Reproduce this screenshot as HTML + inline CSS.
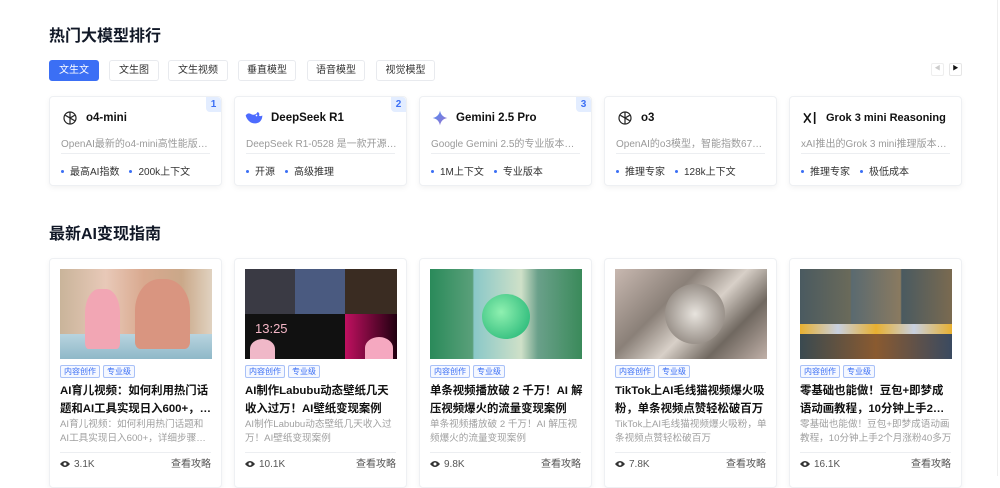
<!DOCTYPE html>
<html><head><meta charset="utf-8"><style>
*{margin:0;padding:0;box-sizing:border-box}
body{width:1000px;height:476px;overflow:hidden;background:#fff;font-family:"Liberation Sans","Noto Sans CJK SC",sans-serif;position:relative;color:#1a1a2e}
.h{position:absolute;left:49px;font-size:16px;font-weight:bold;color:#111827}
.tab{position:absolute;top:60px;height:21px;border:1px solid #e8eaee;border-radius:3px;font-size:10px;line-height:19px;text-align:center;color:#333;background:#fff}
.tab.on{background:#3b6ff5;color:#fff;border-color:#3b6ff5}
.mc{position:absolute;top:96px;width:173px;height:90px;border:1px solid #eef0f3;border-radius:4px;box-shadow:0 2px 6px rgba(0,0,0,.05);background:#fff}
.mc .ic{position:absolute;left:12px;top:13px;width:16px;height:16px}
.mc .nm{position:absolute;left:36px;top:14px;font-size:11.5px;line-height:14px;font-weight:bold;color:#111;white-space:nowrap}
.mc .ds{position:absolute;left:11px;top:38px;width:151px;font-size:10px;color:#9a9a9a;white-space:nowrap;overflow:hidden;text-overflow:ellipsis}
.mc .ln{position:absolute;left:11px;right:11px;top:56px;border-top:1px solid #eceef1}
.mc .tg{position:absolute;left:11px;top:66px;font-size:10px;color:#333;white-space:nowrap}
.mc .tg i{display:inline-block;width:3px;height:3px;border-radius:50%;background:#3b6ff5;vertical-align:middle;margin:0 6px 0 0;position:relative;top:-1px}
.mc .tg span{margin-right:10px}
.bd{position:absolute;right:0;top:0;width:15px;height:15px;background:#e3edff;color:#3b6ff5;font-size:10px;font-weight:bold;text-align:center;line-height:15px;border-radius:0 4px 0 4px}
.gc{position:absolute;top:258px;width:173px;height:230px;border:1px solid #eef0f3;border-radius:4px;box-shadow:0 2px 6px rgba(0,0,0,.05);background:#fff}
.gc .im{position:absolute;left:10px;top:10px;width:152px;height:90px;overflow:hidden}
.gc .tgs{position:absolute;left:10px;top:106px;font-size:8px;white-space:nowrap}
.gc .tgs span{display:inline-block;border:1px solid #a9c1f7;color:#3b6ff5;padding:0 3px;line-height:11px;border-radius:2px;margin-right:3px;background:#f5f8ff}
.gc .tt{position:absolute;left:10px;width:154px;top:123px;font-size:11.4px;font-weight:bold;line-height:18px;color:#111;display:-webkit-box;-webkit-line-clamp:2;-webkit-box-orient:vertical;overflow:hidden}
.gc .de{position:absolute;left:10px;width:152px;top:159px;font-size:9.6px;line-height:14px;color:#a0a0a0;display:-webkit-box;-webkit-line-clamp:2;-webkit-box-orient:vertical;overflow:hidden}
.gc .ln{position:absolute;left:10px;right:10px;top:193px;border-top:1px solid #eceef1}
.gc .ft{position:absolute;left:10px;right:10px;top:199px;height:14px;line-height:14px;font-size:10px;color:#555;display:flex;justify-content:space-between;align-items:center}
.gc .ft svg{width:10px;height:8px;margin-right:4px;vertical-align:-1px}
</style></head><body>
<div class="h" style="top:22px">热门大模型排行</div>
<div class="tab on" style="left:49px;width:50px">文生文</div>
<div class="tab" style="left:109px;width:50px">文生图</div>
<div class="tab" style="left:168px;width:60px">文生视频</div>
<div class="tab" style="left:238px;width:58px">垂直模型</div>
<div class="tab" style="left:307px;width:58px">语音模型</div>
<div class="tab" style="left:376px;width:59px">视觉模型</div>
<div style="position:absolute;left:931px;top:63px;width:13px;height:13px;border:1px solid #eee;border-radius:2px;font-size:6px;color:#ccc;text-align:center;line-height:11px">◀</div>
<div style="position:absolute;left:949px;top:63px;width:13px;height:13px;border:1px solid #e6e6e6;border-radius:2px;font-size:6px;color:#111;text-align:center;line-height:11px">▶</div>
<div style="position:absolute;left:997px;top:0;width:1px;height:476px;background:#eee"></div>

<div class="mc" style="left:49px"><svg class="ic" viewBox="0 0 24 24" fill="none" stroke="#222" stroke-width="1.8"><circle cx="12" cy="12" r="9"/><path d="M12 3v9l7 4M5 8l7 4v9M19 8l-7 4"/></svg><div class="nm">o4-mini</div><div class="ds">OpenAI最新的o4-mini高性能版本...</div><div class="ln"></div><div class="tg"><i></i><span>最高AI指数</span><i></i><span>200k上下文</span></div><div class="bd">1</div></div>
<div class="mc" style="left:234px"><svg class="ic" style="width:20px;left:9px" viewBox="0 0 24 18"><path d="M2 6c2 7 8 11 14 9 4-1 6-5 6-9-2 1-3 1-4 0 1-2 0-4-2-4-1 3-5 4-8 2C6 3 4 3 2 6z" fill="#4d6bfe"/><circle cx="15" cy="6" r="1" fill="#fff"/></svg><div class="nm">DeepSeek R1</div><div class="ds">DeepSeek R1-0528 是一款开源推...</div><div class="ln"></div><div class="tg"><i></i><span>开源</span><i></i><span>高级推理</span></div><div class="bd">2</div></div>
<div class="mc" style="left:419px"><svg class="ic" viewBox="0 0 24 24"><defs><linearGradient id="g" x1="0" y1="0" x2="1" y2="1"><stop offset="0" stop-color="#4f8df5"/><stop offset="1" stop-color="#9b72cb"/></linearGradient></defs><path d="M12 1C13 7 17 11 23 12 17 13 13 17 12 23 11 17 7 13 1 12 7 11 11 7 12 1z" fill="url(#g)"/></svg><div class="nm">Gemini 2.5 Pro</div><div class="ds">Google Gemini 2.5的专业版本，...</div><div class="ln"></div><div class="tg"><i></i><span>1M上下文</span><i></i><span>专业版本</span></div><div class="bd">3</div></div>
<div class="mc" style="left:604px"><svg class="ic" viewBox="0 0 24 24" fill="none" stroke="#222" stroke-width="1.8"><circle cx="12" cy="12" r="9"/><path d="M12 3v9l7 4M5 8l7 4v9M19 8l-7 4"/></svg><div class="nm">o3</div><div class="ds">OpenAI的o3模型，智能指数67分...</div><div class="ln"></div><div class="tg"><i></i><span>推理专家</span><i></i><span>128k上下文</span></div></div>
<div class="mc" style="left:789px"><svg class="ic" viewBox="0 0 24 24" stroke="#111" stroke-width="2.4" fill="none"><path d="M3 5l10 14M13 5L3 19M19 3v18"/></svg><div class="nm" style="font-size:11px">Grok 3 mini Reasoning</div><div class="ds">xAI推出的Grok 3 mini推理版本，...</div><div class="ln"></div><div class="tg"><i></i><span>推理专家</span><i></i><span>极低成本</span></div></div>

<div class="h" style="top:220px">最新AI变现指南</div>

<div class="gc" style="left:49px"><div class="im" style="background:linear-gradient(90deg,#c9b49a 0%,#e8c9b8 30%,#d9a98f 55%,#caa889 80%,#e0d2c0 100%)"><div style="position:absolute;left:0;bottom:0;width:152px;height:25px;background:linear-gradient(#b8d4df,#8fb8c8)"></div><div style="position:absolute;left:25px;top:20px;width:35px;height:60px;border-radius:40% 40% 10% 10%;background:#f2a6b4"></div><div style="position:absolute;left:75px;top:10px;width:55px;height:70px;border-radius:45% 45% 10% 10%;background:#d99580"></div></div><div class="tgs"><span>内容创作</span><span>专业级</span></div><div class="tt">AI育儿视频：如何利用热门话题和AI工具实现日入600+，详细步骤拆解</div><div class="de">AI育儿视频：如何利用热门话题和AI工具实现日入600+，详细步骤拆解</div><div class="ln"></div><div class="ft"><span><svg viewBox="0 0 10 8"><path d="M0 4Q5-2 10 4Q5 10 0 4z" fill="#333"/><circle cx="5" cy="4" r="1.5" fill="#fff"/></svg>3.1K</span><span>查看攻略</span></div></div>
<div class="gc" style="left:234px"><div class="im" style="background:#111"><div style="position:absolute;left:0;top:0;width:50px;height:45px;background:#3a3a44"></div><div style="position:absolute;left:50px;top:0;width:50px;height:45px;background:#4a5a80"></div><div style="position:absolute;left:100px;top:0;width:52px;height:45px;background:#3a2c22"></div><div style="position:absolute;left:100px;top:45px;width:52px;height:45px;background:linear-gradient(90deg,#c01060,#200010)"></div><div style="position:absolute;left:10px;top:52px;color:#f4b6c6;font-size:13px">13:25</div><div style="position:absolute;left:5px;top:70px;width:25px;height:20px;border-radius:50% 50% 0 0;background:#f0b8c8"></div><div style="position:absolute;left:120px;top:68px;width:28px;height:22px;border-radius:50% 50% 0 0;background:#f5a8c0"></div></div><div class="tgs"><span>内容创作</span><span>专业级</span></div><div class="tt">AI制作Labubu动态壁纸几天收入过万！AI壁纸变现案例</div><div class="de">AI制作Labubu动态壁纸几天收入过万！AI壁纸变现案例</div><div class="ln"></div><div class="ft"><span><svg viewBox="0 0 10 8"><path d="M0 4Q5-2 10 4Q5 10 0 4z" fill="#333"/><circle cx="5" cy="4" r="1.5" fill="#fff"/></svg>10.1K</span><span>查看攻略</span></div></div>
<div class="gc" style="left:419px"><div class="im" style="background:linear-gradient(90deg,#2a8a5a 0%,#5aa07a 28%,#8ac8c8 29%,#cfe0c8 60%,#6aa08a 71%,#3a8a5a 100%)"><div style="position:absolute;left:52px;top:25px;width:48px;height:45px;border-radius:50%;background:radial-gradient(circle at 40% 40%,#8ff0b0,#18b070)"></div></div><div class="tgs"><span>内容创作</span><span>专业级</span></div><div class="tt">单条视频播放破 2 千万！AI 解压视频爆火的流量变现案例</div><div class="de">单条视频播放破 2 千万！AI 解压视频爆火的流量变现案例</div><div class="ln"></div><div class="ft"><span><svg viewBox="0 0 10 8"><path d="M0 4Q5-2 10 4Q5 10 0 4z" fill="#333"/><circle cx="5" cy="4" r="1.5" fill="#fff"/></svg>9.8K</span><span>查看攻略</span></div></div>
<div class="gc" style="left:604px"><div class="im" style="background:linear-gradient(135deg,#c8b8b0 0%,#8a8078 35%,#d8d0c8 55%,#706860 75%,#c0b0a8 100%)"><div style="position:absolute;left:50px;top:15px;width:60px;height:60px;border-radius:50%;background:radial-gradient(#e8e4de,#7a7068)"></div></div><div class="tgs"><span>内容创作</span><span>专业级</span></div><div class="tt">TikTok上AI毛线猫视频爆火吸粉，单条视频点赞轻松破百万</div><div class="de">TikTok上AI毛线猫视频爆火吸粉，单条视频点赞轻松破百万</div><div class="ln"></div><div class="ft"><span><svg viewBox="0 0 10 8"><path d="M0 4Q5-2 10 4Q5 10 0 4z" fill="#333"/><circle cx="5" cy="4" r="1.5" fill="#fff"/></svg>7.8K</span><span>查看攻略</span></div></div>
<div class="gc" style="left:789px"><div class="im" style="background:linear-gradient(90deg,#4a5a60 0%,#6a6a5a 33%,#5a6a70 34%,#8a7a60 66%,#4a5a60 67%,#7a6a50 100%)"><div style="position:absolute;left:0;top:58px;width:152px;height:32px;background:linear-gradient(90deg,#3a4a50,#8a5a30,#3a4a60)"></div><div style="position:absolute;left:0;top:55px;width:152px;height:10px;background:linear-gradient(90deg,#e8b030,#c8d0e0,#e8b030,#c8d0e0,#e8b030)"></div></div><div class="tgs"><span>内容创作</span><span>专业级</span></div><div class="tt">零基础也能做！豆包+即梦成语动画教程，10分钟上手2个月涨粉40多万</div><div class="de">零基础也能做！豆包+即梦成语动画教程，10分钟上手2个月涨粉40多万</div><div class="ln"></div><div class="ft"><span><svg viewBox="0 0 10 8"><path d="M0 4Q5-2 10 4Q5 10 0 4z" fill="#333"/><circle cx="5" cy="4" r="1.5" fill="#fff"/></svg>16.1K</span><span>查看攻略</span></div></div>
</body></html>
